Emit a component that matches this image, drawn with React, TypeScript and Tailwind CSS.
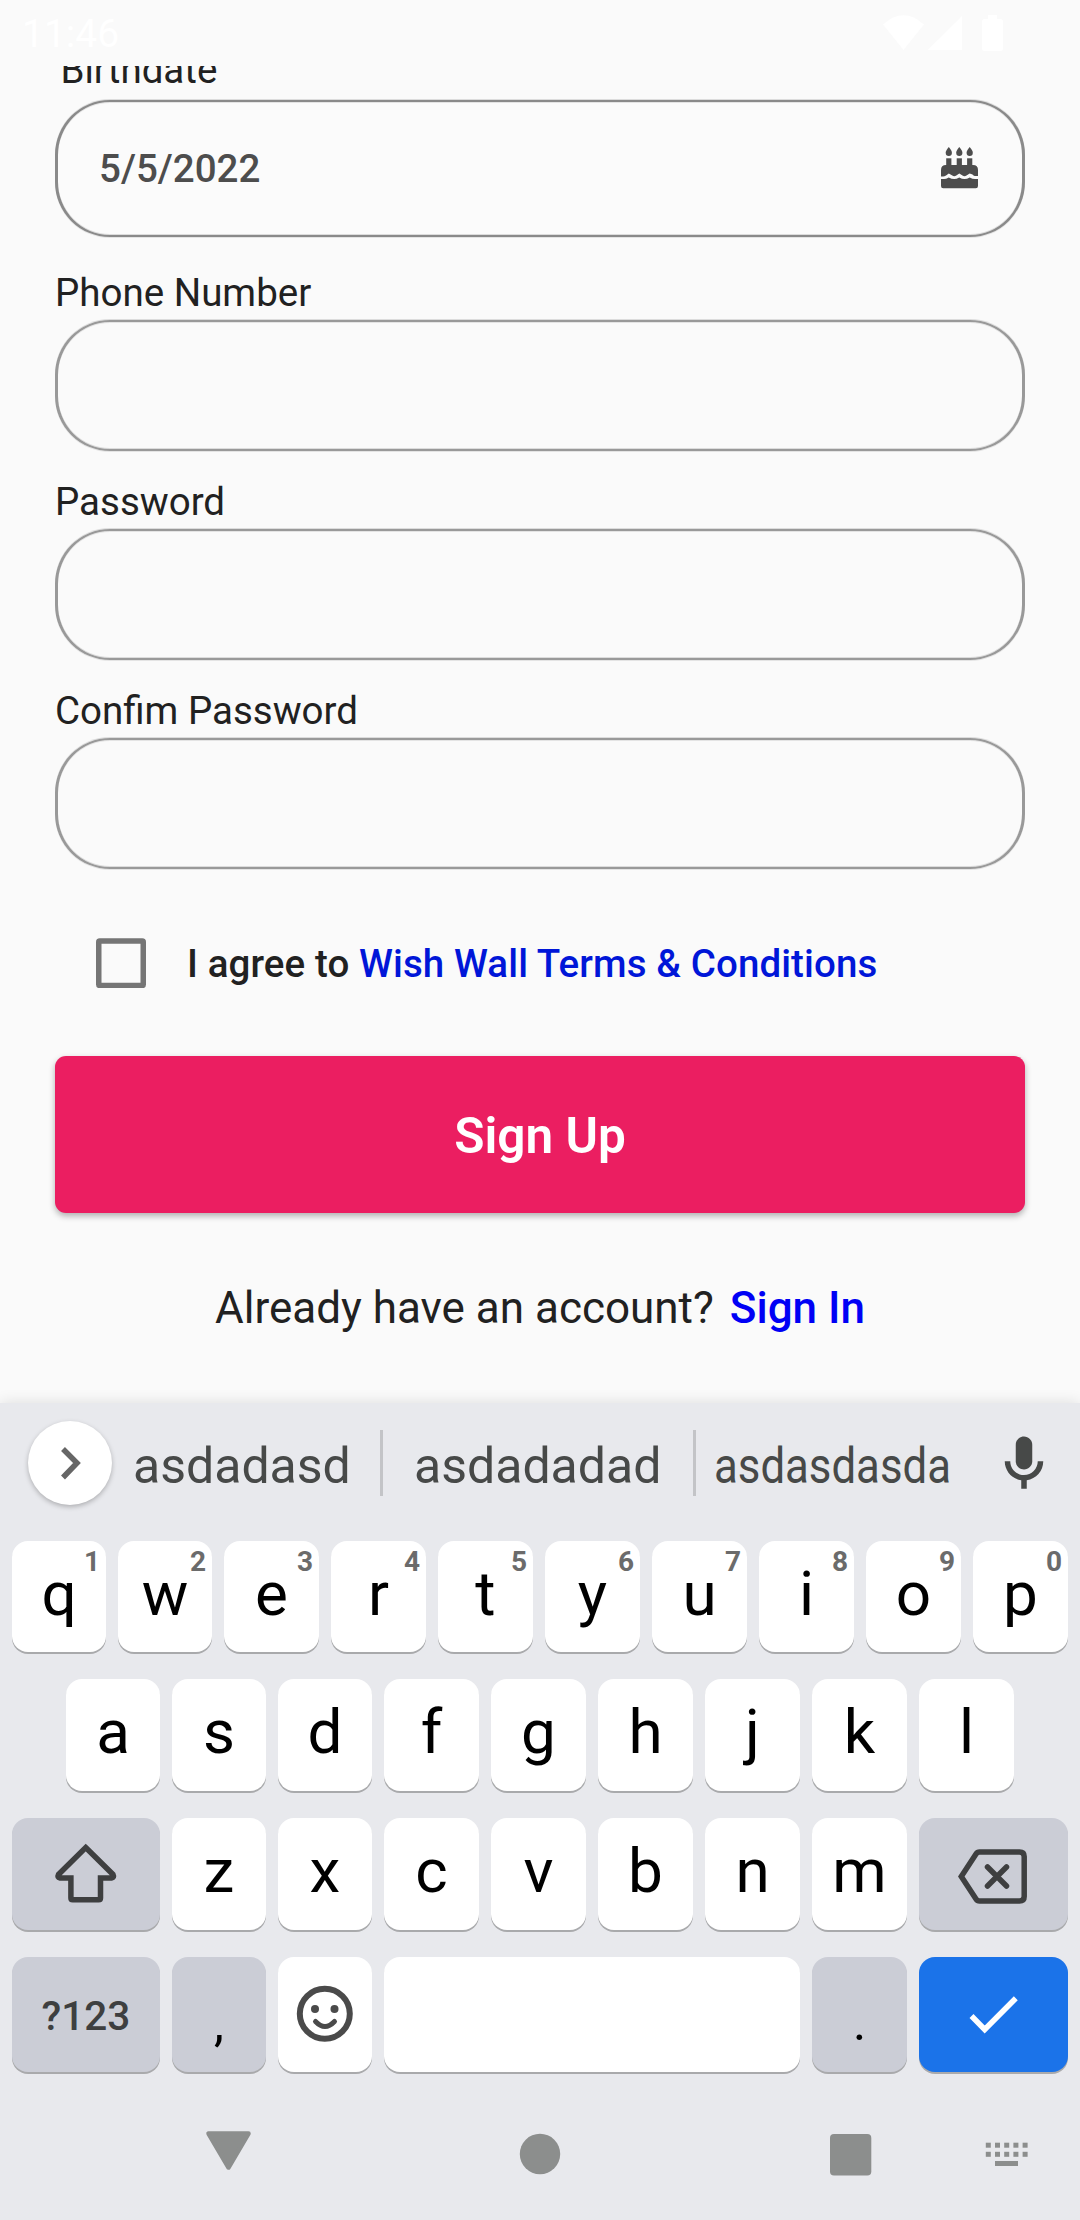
import React from "react";

const lineShadow =
  "shadow-[0_-1px_0_#dcdcdc,0_1px_0_#e4e4e4,inset_0_1px_0_#e4e4e4,inset_0_-1px_0_#dcdcdc]";

function Field({ label }: { label: string }) {
  return (
    <div className="mb-[29px]">
      <div className="h-[49px] text-[38.5px] leading-[44px] text-[#212121]">{label}</div>
      <div className={`h-[131px] rounded-[55px] border-x-3 border-y-2 border-[#999] ${lineShadow}`} />
    </div>
  );
}

function CakeIcon() {
  return (
    <svg className="mb-[2px]" width="37" height="42" viewBox="0 0 37 42" fill="currentColor">
      {[7.8, 18.300, 28.700].map((x) => (
        <g key={x} transform={`translate(${x} 0)`}>
          <path d="M0 0Q3.100 3.600 3.100 5.800Q3.100 9 0 9Q-3.100 9-3.100 5.800Q-3.100 3.600 0 0Z" />
          <rect x="-2.600" y="11.300" width="5.200" height="8" />
        </g>
      ))}
      <path d="M0 23Q0 18 5 18H32Q37 18 37 23V29H34Q33 29 31.500 27.500L28.700 26.500L25.500 28.500Q23.500 30 21.500 28.500L18.300 26.500L15.300 28.500Q13.300 30 11.300 28.500L7.800 26.500L5 28.500Q3.500 29.500 2 29.500H0Z" />
      <path d="M0 32H3Q5 32 7.800 30.400Q10.500 32 13.200 32Q15.500 32 18.300 30.400Q21 32 23.500 32Q26 32 28.700 30.400Q31.500 32 34 32H37V39Q37 41.200 34.800 41.200H2.200Q0 41.200 0 39Z" />
    </svg>
  );
}

function Key({ c, n, w }: { c: string; n?: string; w: string }) {
  return (
    <div
      className={`relative flex h-full justify-center rounded-[16px] bg-white text-[62px] leading-[105px] text-black shadow-[0_2px_0_#a9aaac] ${w}`}
    >
      {c}
      {n && (
        <span className="absolute top-[4px] right-[6px] text-[28px] leading-[33px] font-bold text-[#6b6b6b]">{n}</span>
      )}
    </div>
  );
}

function GrayKey({ w, children }: { w: string; children: React.ReactNode }) {
  return (
    <div className={`flex h-full justify-center rounded-[16px] bg-[#cbcdd6] shadow-[0_2px_0_#a9aaac] ${w}`}>
      {children}
    </div>
  );
}

const top10 = "qwertyuiop".split("");
const mid9 = "asdfghjkl".split("");
const low7 = "zxcvbnm".split("");

export default function App() {
  return (
    <div className="flex h-[2220px] w-[1080px] flex-col overflow-hidden bg-[#fafafa] font-['Roboto',sans-serif]">
      {/* status bar */}
      <div className="flex h-[66px] shrink-0 justify-between pr-[77px] pl-[22px] text-white">
        <span className="pt-[11px] text-[39px] leading-[46px]">11:46</span>
        <svg width="121" height="66" viewBox="882 0 121 66" fill="currentColor">
          <path d="M883 24.500Q903.500 6 924 24.500L903.500 50Z" />
          <path d="M962 16V50H927.500Z" />
          <path d="M988 15h9v4h3.500q2.500 0 2.500 2.500V48.500q0 2.500-2.500 2.500h-16q-2.500 0-2.500-2.500V21.500q0-2.500 2.500-2.500h3.500z" />
        </svg>
      </div>

      {/* form */}
      <div className="h-[1337px] shrink-0 overflow-hidden px-[55px]">
        <div className="-mt-[18px] h-[52px] pl-[5.5px] text-[38.5px] leading-[44px] text-[#212121]">Birthdate</div>
        <div
          className={`flex h-[137px] items-center justify-between rounded-[55px] border-x-3 border-y-2 border-[#8a8a8a] bg-[#fbfbfb] pr-[44px] pl-[41px] text-[#4d4d4d] ${lineShadow}`}
        >
          <span className="text-[38.5px] leading-[44px] font-medium">5/5/2022</span>
          <CakeIcon />
        </div>
        <div className="h-[34px]" />
        <Field label="Phone Number" />
        <Field label="Password" />
        <Field label="Confim Password" />

        <div className="mt-[69px] flex h-[50px] items-center pl-[41px]">
          <svg width="50" height="50" viewBox="0 0 50 50" fill="none">
            <rect x="2.75" y="3" width="44.500" height="44.500" rx="1" stroke="#757575" strokeWidth="5.500" />
          </svg>
          <span className="pt-[2px] pl-[41px] text-[38.5px] leading-[44px] font-medium tracking-[0.1px] text-[#212121]">
            I agree to <span className="text-[#0016d8]">Wish Wall Terms &amp; Conditions</span>
          </span>
        </div>

        <div className="mt-[68px] flex h-[157px] justify-center rounded-[11px] bg-[#eb1e61] text-[49.500px] leading-[160px] font-semibold text-white shadow-[0_3px_6px_rgba(0,0,0,0.3)]">
          Sign Up
        </div>

        <div className="mt-[69px] flex justify-center text-[44px] leading-[52px] text-[#212121]">
          <span>Already have an account?</span>
          <span className="pl-[16px] font-medium text-[#0000f5]">Sign In</span>
        </div>
      </div>

      {/* keyboard */}
      <div className="relative h-[817px] shrink-0 bg-[#e8e9ed] shadow-[0_0_14px_rgba(0,0,0,0.12)]">
        <div className="flex h-[138px] text-[50px] text-[#474948]">
          <div className="mt-[18px] ml-[28px] size-[84px] rounded-full bg-white shadow-[0_2px_5px_rgba(0,0,0,0.25)]">
            <svg width="84" height="84" viewBox="0 0 84 84" fill="none">
              <path d="M35 28L49 42L35 56.500" stroke="#666" strokeWidth="5.500" />
            </svg>
          </div>
          <div className="w-[268px] pl-[21px] leading-[126px]">asdadasd</div>
          <div className="mt-[27px] h-[66px] w-[3px] bg-[#c3c4c7]" />
          <div className="w-[310px] pl-[31px] leading-[126px]">asdadadad</div>
          <div className="mt-[27px] h-[66px] w-[3px] bg-[#c3c4c7]" />
          <div className="w-[295px] pl-[18px] leading-[126px]">
            <span className="inline-block origin-left scale-x-[0.875]">asdasdasda</span>
          </div>
          <svg className="mt-[27.500px] shrink-0" width="66" height="66" viewBox="0 0 24 24" fill="#474948">
            <path d="M12 14c1.660 0 3-1.340 3-3V5c0-1.660-1.340-3-3-3S9 3.340 9 5v6c0 1.660 1.340 3 3 3z" />
            <path d="M17 11c0 2.760-2.240 5-5 5s-5-2.240-5-5H5c0 3.530 2.610 6.430 6 6.920V21h2v-3.080c3.390-.49 6-3.390 6-6.920h-2z" />
          </svg>
        </div>

        <div className="flex h-[111px] gap-[12px] px-[12px]">
          {top10.map((c, i) => (
            <Key key={c} c={c} n={String((i + 1) % 10)} w={i < 2 ? "w-[94px]" : "w-[95px]"} />
          ))}
        </div>
        <div className="mt-[27px] flex h-[112px] gap-[12px] px-[66px]">
          {mid9.map((c, i) => (
            <Key key={c} c={c} w={i < 3 ? "w-[94px]" : "w-[95px]"} />
          ))}
        </div>
        <div className="mt-[27px] flex h-[112px] gap-[12px] px-[12px]">
          <GrayKey w="w-[148px]">
            <svg width="148" height="112" viewBox="12 1818 148 112" fill="none">
              <path
                d="M85.700 1847.500L113 1874.500Q114.500 1877.500 111.500 1878H100.500V1898Q100.500 1899.800 98.700 1899.800H72.700Q70.900 1899.800 70.900 1898V1878H60Q57 1877.500 58.500 1874.500Z"
                stroke="#3e3f40"
                strokeWidth="5.500"
              />
            </svg>
          </GrayKey>
          {low7.map((c, i) => (
            <Key key={c} c={c} w={i < 2 ? "w-[94px]" : "w-[95px]"} />
          ))}
          <GrayKey w="w-[149px]">
            <svg width="149" height="112" viewBox="919 1818 149 112" fill="none" stroke="#3e3f40" strokeWidth="5.500">
              <path d="M961.300 1876.500L976 1854Q977.300 1852 979.500 1852H1019.500Q1024.200 1852 1024.200 1856.500V1896.500Q1024.200 1901 1019.500 1901H979.500Q977.300 1901 976 1899Z" />
              <path d="M987.500 1867L1006.500 1886M1006.500 1867L987.500 1886" strokeLinecap="round" />
            </svg>
          </GrayKey>
        </div>
        <div className="mt-[27px] flex h-[115px] gap-[12px] px-[12px]">
          <GrayKey w="w-[148px]">
            <span className="text-[40.500px] leading-[118px] font-medium text-[#3e3f40]">?123</span>
          </GrayKey>
          <GrayKey w="w-[94px]">
            <span className="text-[50px] leading-[133px] text-black">,</span>
          </GrayKey>
          <div className="flex h-full w-[94px] justify-center rounded-[16px] bg-white shadow-[0_2px_0_#a9aaac]">
            <svg width="94" height="115" viewBox="278 1957 94 115" fill="none">
              <circle cx="324.800" cy="2013.800" r="25" stroke="#4a4a4a" strokeWidth="6" />
              <circle cx="315" cy="2009" r="4" fill="#4a4a4a" />
              <circle cx="334.500" cy="2009" r="4" fill="#4a4a4a" />
              <path d="M315.500 2021.500Q325 2031.500 334.500 2021.500" stroke="#4a4a4a" strokeWidth="5" strokeLinecap="round" />
            </svg>
          </div>
          <div className="h-full w-[416px] rounded-[16px] bg-white shadow-[0_2px_0_#a9aaac]" />
          <GrayKey w="w-[95px]">
            <span className="text-[50px] leading-[133px] text-black">.</span>
          </GrayKey>
          <div className="h-full w-[149px] rounded-[16px] bg-[#1b73e9] shadow-[0_2px_0_#a9aaac]">
            <svg width="149" height="115" viewBox="919 1957 149 115" fill="none">
              <path d="M971.500 2016L984.700 2029.500L1015.800 1998.200" stroke="white" strokeWidth="5.500" />
            </svg>
          </div>
        </div>

        {/* navigation bar */}
        <div className="flex h-[148px]">
          <svg width="1080" height="148" viewBox="0 2072 1080 148" fill="#8c8e8d">
            <path
              d="M208.500 2133.500H248.500L228.500 2167.500Z"
              stroke="#8c8e8d"
              strokeWidth="4.500"
              strokeLinejoin="round"
            />
            <circle cx="540" cy="2154" r="20.200" />
            <rect x="830" y="2134" width="41.300" height="41.500" rx="4" />
            {[0, 1, 2, 3, 4].map((i) => (
              <g key={i}>
                <rect x={985.800 + i * 9.200} y="2142.700" width="5" height="5" />
                <rect x={985.800 + i * 9.200} y="2151.800" width="5" height="5" />
              </g>
            ))}
            <rect x="995" y="2161" width="23" height="5" />
          </svg>
        </div>
      </div>
    </div>
  );
}
